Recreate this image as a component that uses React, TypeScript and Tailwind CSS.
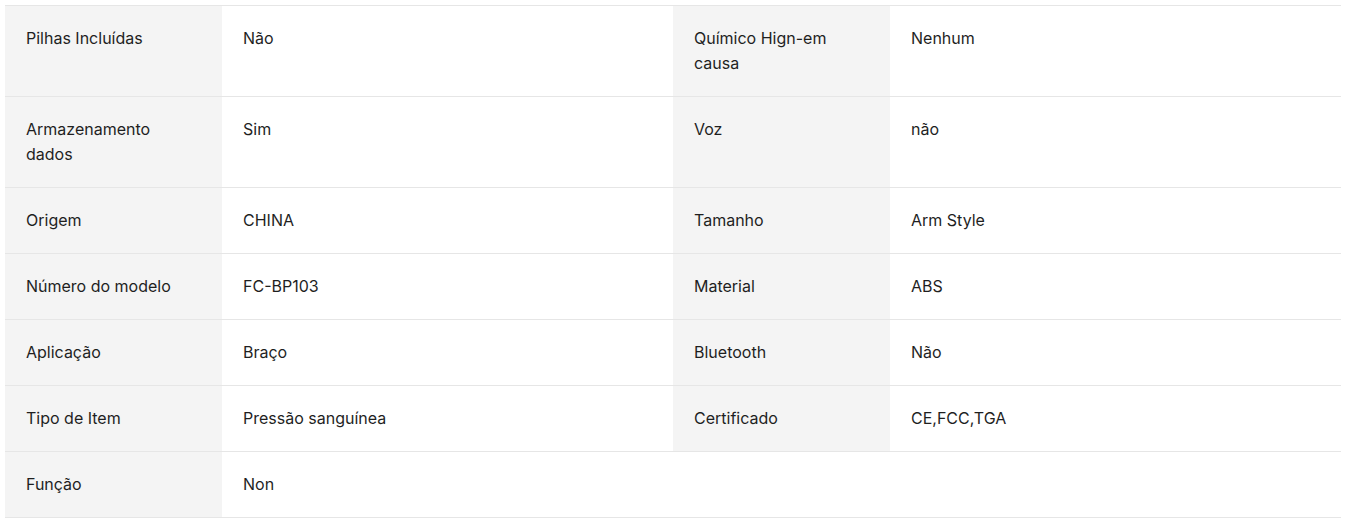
import React from "react";

type Spec = { label: string; value: string };

const rows: Spec[][] = [
  [
    { label: "Pilhas Incluídas", value: "Não" },
    { label: "Químico Hign-em causa", value: "Nenhum" },
  ],
  [
    { label: "Armazenamento dados", value: "Sim" },
    { label: "Voz", value: "não" },
  ],
  [
    { label: "Origem", value: "CHINA" },
    { label: "Tamanho", value: "Arm Style" },
  ],
  [
    { label: "Número do modelo", value: "FC-BP103" },
    { label: "Material", value: "ABS" },
  ],
  [
    { label: "Aplicação", value: "Braço" },
    { label: "Bluetooth", value: "Não" },
  ],
  [
    { label: "Tipo de Item", value: "Pressão sanguínea" },
    { label: "Certificado", value: "CE,FCC,TGA" },
  ],
  [{ label: "Função", value: "Non" }],
];

export default function App() {
  return (
    <div className="min-h-[522px] bg-white pt-[5px] pl-[5px] font-['Inter',sans-serif] text-[16px] leading-[25px] text-[#1f1f1f]">
      <div className="w-[1336px] border-t border-[#e6e6e6]">
        {rows.map((row, i) => (
          <div key={i} className="grid grid-cols-[217px_451px_217px_451px] border-b border-[#e6e6e6]">
            {row.map((cell, j) => (
              <React.Fragment key={j}>
                <div className="bg-[#f4f4f4] py-5 pl-[21px] pr-6">{cell.label}</div>
                <div className="py-5 pl-[21px] pr-5">{cell.value}</div>
              </React.Fragment>
            ))}
          </div>
        ))}
      </div>
    </div>
  );
}
